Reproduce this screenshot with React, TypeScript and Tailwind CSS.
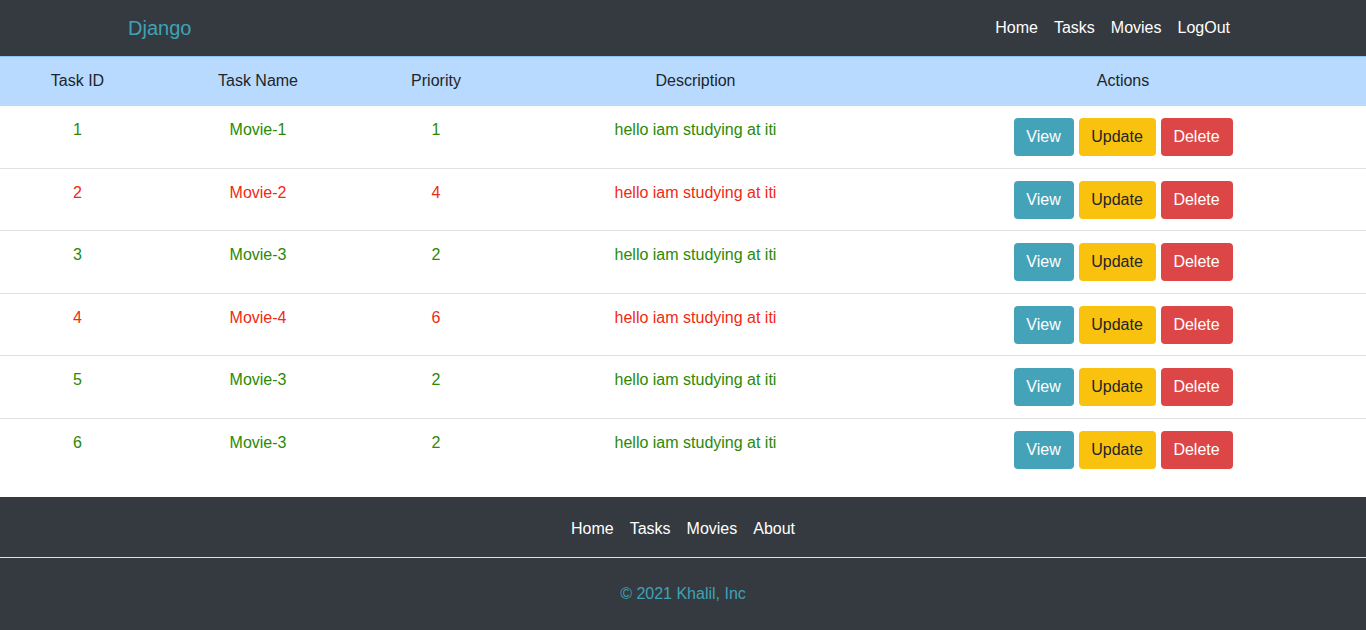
import React from "react";

const rows = [
  { id: 1, name: "Movie-1", pr: 1, ok: true },
  { id: 2, name: "Movie-2", pr: 4, ok: false },
  { id: 3, name: "Movie-3", pr: 2, ok: true },
  { id: 4, name: "Movie-4", pr: 6, ok: false },
  { id: 5, name: "Movie-3", pr: 2, ok: true },
  { id: 6, name: "Movie-3", pr: 2, ok: true },
];

export default function App() {
  return (
    <div className="min-h-[630px] bg-white text-[16px] leading-6 text-[#212529]" style={{ fontFamily: '"Liberation Sans", Arial, sans-serif' }}>
      <nav className="h-[56px] bg-[#343a40]">
        <div className="mx-auto flex h-full w-[1140px] items-center justify-between px-[15px]">
          <span className="text-[20px] leading-[30px] text-[#3ea3b6]">Django</span>
          <div className="flex text-white">
            {["Home", "Tasks", "Movies", "LogOut"].map((t) => (
              <span key={t} className="px-2 py-2">{t}</span>
            ))}
          </div>
        </div>
      </nav>
      <table className="mb-[17px] w-full border-collapse text-center">
        <thead>
          <tr className="border-t border-b border-t-[#8cc0ff] border-b-[#b8daff] bg-[#b8daff]">
            <th className="w-[155px] px-3 py-3 font-normal">Task ID</th>
            <th className="w-[206px] px-3 py-3 font-normal">Task Name</th>
            <th className="w-[150px] px-3 py-3 font-normal">Priority</th>
            <th className="w-[369px] px-3 py-3 font-normal">Description</th>
            <th className="px-3 py-3 font-normal">Actions</th>
          </tr>
        </thead>
        <tbody>
          {rows.map((r, i) => {
            const c = r.ok ? "text-[#2a8a06]" : "text-[#f02a14]";
            return (
              <tr key={r.id} className={i < rows.length - 1 ? "border-b border-[#dee2e6]" : ""}>
                <td className={`px-3 pt-3 pb-[11.5px] align-top ${c}`}>{r.id}</td>
                <td className={`px-3 pt-3 pb-[11.5px] align-top ${c}`}>{r.name}</td>
                <td className={`px-3 pt-3 pb-[11.5px] align-top ${c}`}>{r.pr}</td>
                <td className={`px-3 pt-3 pb-[11.5px] align-top ${c}`}>hello iam studying at iti</td>
                <td className="px-3 pt-3 pb-[11.5px] align-top">
                  <div className="flex justify-center gap-[5px]">
                    <span className="h-[38px] w-[60px] rounded-[4px] bg-[#44a3b8] py-[7px] text-center text-white">View</span>
                    <span className="h-[38px] w-[77px] rounded-[4px] bg-[#f9c20f] py-[7px] text-center text-[#212529]">Update</span>
                    <span className="h-[38px] w-[72px] rounded-[4px] bg-[#dd4646] py-[7px] text-center text-white">Delete</span>
                  </div>
                </td>
              </tr>
            );
          })}
        </tbody>
      </table>
      <footer className="h-[133px] bg-[#343a40] pt-[12px]">
        <div className="flex justify-center border-b border-[#dee2e6] pb-2 text-white">
          {["Home", "Tasks", "Movies", "About"].map((t) => (
            <span key={t} className="px-2 py-2">{t}</span>
          ))}
        </div>
        <p className="mt-[24px] text-center text-[#3ea3b6]">© 2021 Khalil, Inc</p>
      </footer>
    </div>
  );
}
